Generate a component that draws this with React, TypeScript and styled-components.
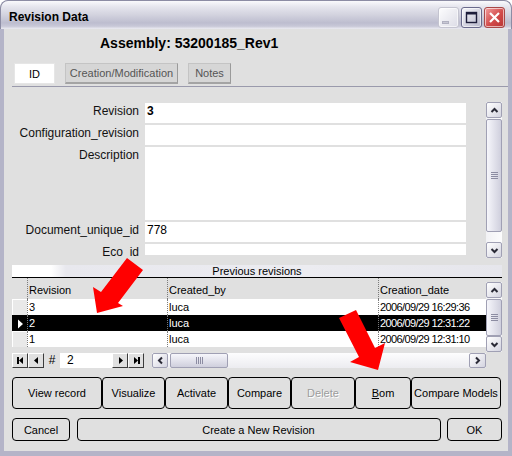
import React from 'react';
import styled, { createGlobalStyle } from 'styled-components';

const GlobalStyle = createGlobalStyle`
  * { box-sizing: border-box; }
  body {
    margin: 0;
    background: #fff;
    font-family: "Liberation Sans", Arial, sans-serif;
  }
`;

type Dir = 'up' | 'down' | 'left' | 'right';
const turn: Record<Dir, number> = { up: 0, right: 90, down: 180, left: 270 };

const fields = [
  { label: 'Revision', value: '3', bold: true },
  { label: 'Configuration_revision', value: '' },
  { label: 'Description', value: '' },
  { label: 'Document_unique_id', value: '778' },
  { label: 'Eco_id', value: '' },
];

const revisions = [
  { rev: '3', by: 'luca', date: '2006/09/29 16:29:36' },
  { rev: '2', by: 'luca', date: '2006/09/29 12:31:22', current: true },
  { rev: '1', by: 'luca', date: '2006/09/29 12:31:10' },
];

const actions = [
  { label: 'View record' },
  { label: 'Visualize' },
  { label: 'Activate' },
  { label: 'Compare' },
  { label: 'Delete', disabled: true },
  { label: 'Bom', mnemonic: true },
  { label: 'Compare Models' },
];

function Chevron({ dir }: { dir: Dir }) {
  return (
    <ChevronSvg $deg={turn[dir]} width="9" height="9" viewBox="0 0 9 9">
      <path d="M1.5 6 L4.5 3 L7.5 6" stroke="#2a2a36" strokeWidth="2" fill="none" />
    </ChevronSvg>
  );
}

function VScroll({ height, thumb, top = 0 }: { height: number; thumb: number; top?: number }) {
  return (
    <VBar $h={height} $top={top}>
      <ScrollBtn><Chevron dir="up" /></ScrollBtn>
      <VThumb $len={thumb}><Grip /></VThumb>
      <Spacer />
      <ScrollBtn><Chevron dir="down" /></ScrollBtn>
    </VBar>
  );
}

function NavGlyph({ kind }: { kind: 'first' | 'prev' | 'next' | 'last' }) {
  const shape = {
    first: 'M2 2 h2 v7 h-2 z M8 2 L4 5.5 L8 9 z',
    prev: 'M7 2 L3 5.5 L7 9 z',
    next: 'M4 2 L8 5.5 L4 9 z',
    last: 'M3 2 L7 5.5 L3 9 z M7 2 h2 v7 h-2 z',
  }[kind];
  return (
    <svg width="11" height="11" viewBox="0 0 11 11">
      <path d={shape} fill="#000" />
    </svg>
  );
}

function Arrows() {
  return (
    <Overlay width="512" height="456" viewBox="0 0 512 456">
      <polygon fill="#ff0000" points="127,258 101,292 93,287 97,313 123,306 118,303 143,270" />
      <polygon fill="#ff0000" points="339,318 359,357 350,362 378,370 385,343 375,348 356,310" />
    </Overlay>
  );
}

export default function App() {
  return (
    <>
      <GlobalStyle />
      <Window>
        <TitleBar>
          <TitleText>Revision Data</TitleText>
          <Controls>
            <CtrlButton $kind="min">
              <MinBar />
            </CtrlButton>
            <CtrlButton $kind="max">
              <svg width="13" height="13" viewBox="0 0 13 13">
                <rect x="1.5" y="1.5" width="10" height="10" fill="none" stroke="#1c1c3a" strokeWidth="1.4" />
                <rect x="1" y="1" width="11" height="2.5" fill="#1c1c3a" />
              </svg>
            </CtrlButton>
            <CtrlButton $kind="close">
              <svg width="13" height="13" viewBox="0 0 13 13">
                <path d="M2 2 L11 11 M11 2 L2 11" stroke="#fff" strokeWidth="2.2" />
              </svg>
            </CtrlButton>
          </Controls>
        </TitleBar>

        <Body>
          <Assembly>Assembly: 53200185_Rev1</Assembly>

          <TabBar>
            <Tab $active $w={41}>ID</Tab>
            <Tab $w={113}>Creation/Modification</Tab>
            <Tab $w={43}>Notes</Tab>
          </TabBar>

          <FormArea>
            <Fields>
              {fields.map((f) => (
                <React.Fragment key={f.label}>
                  <FieldLabel>{f.label}</FieldLabel>
                  <FieldValue $bold={f.bold}>{f.value}</FieldValue>
                </React.Fragment>
              ))}
            </Fields>
            <VScroll height={156} thumb={113} />
          </FormArea>

          <GridPanel>
            <Strip>Previous revisions</Strip>
            <TableArea>
              <Table>
                <HeaderRow>
                  <Indicator $head />
                  <Cell>Revision</Cell>
                  <Cell>Created_by</Cell>
                  <Cell>Creation_date</Cell>
                </HeaderRow>
                {revisions.map((r) => (
                  <Row key={r.rev} $sel={r.current}>
                    <Indicator $sel={r.current}>
                      {r.current && (
                        <svg width="7" height="10" viewBox="0 0 7 10">
                          <path d="M1 0.5 L6 5 L1 9.5 z" fill="#fff" />
                        </svg>
                      )}
                    </Indicator>
                    <Cell>{r.rev}</Cell>
                    <Cell>{r.by}</Cell>
                    <Cell $tight>{r.date}</Cell>
                  </Row>
                ))}
              </Table>
              <VScroll top={4} height={70} thumb={37} />
            </TableArea>

            <NavBar>
              <NavBtn><NavGlyph kind="first" /></NavBtn>
              <NavBtn><NavGlyph kind="prev" /></NavBtn>
              <Hash>#</Hash>
              <RecordBox>2</RecordBox>
              <NavBtn><NavGlyph kind="next" /></NavBtn>
              <NavBtn><NavGlyph kind="last" /></NavBtn>
              <HBar>
                <ScrollBtn><Chevron dir="left" /></ScrollBtn>
                <HThumb $len={58}><Grip $across /></HThumb>
                <Spacer />
                <ScrollBtn $wide><Chevron dir="right" /></ScrollBtn>
              </HBar>
            </NavBar>
          </GridPanel>

          <ButtonRow>
            {actions.map((a) => (
              <Button key={a.label} disabled={a.disabled}>
                {a.mnemonic ? (
                  <>
                    <u>{a.label[0]}</u>
                    {a.label.slice(1)}
                  </>
                ) : (
                  a.label
                )}
              </Button>
            ))}
          </ButtonRow>

          <BottomRow>
            <Button $w={58}>Cancel</Button>
            <Button $w={364}>Create a New Revision</Button>
            <Button $w={55}>OK</Button>
          </BottomRow>
        </Body>

        <Arrows />
      </Window>
    </>
  );
}

const Window = styled.div`
  position: relative;
  width: 512px;
  height: 456px;
  display: flex;
  flex-direction: column;
  border-radius: 8px 8px 0 0;
  overflow: hidden;
  background: #a9a9be;
`;

const TitleBar = styled.div`
  flex: none;
  height: 29px;
  display: flex;
  align-items: center;
  padding: 3px 6px 0 8px;
  border: 1px solid #8c8ca4;
  border-bottom: none;
  border-radius: 8px 8px 0 0;
  background: linear-gradient(
    #fafafc 0%,
    #e6e6ee 20%,
    #d2d2de 50%,
    #bdbdcf 78%,
    #c8c8d8 90%,
    #ececf2 100%
  );
`;

const TitleText = styled.div`
  flex: 1;
  font-size: 12px;
  font-weight: bold;
  color: #000;
`;

const Controls = styled.div`
  display: flex;
  gap: 2px;
  margin-top: 2px;
`;

const CtrlButton = styled.div<{ $kind: 'min' | 'max' | 'close' }>`
  width: 21px;
  height: 21px;
  border-radius: 3px;
  display: flex;
  align-items: center;
  justify-content: center;
  border: 1px solid
    ${(p) => (p.$kind === 'min' ? '#c4c4d0' : p.$kind === 'max' ? '#6a6a8c' : '#a84848')};
  background: ${(p) =>
    p.$kind === 'min'
      ? 'linear-gradient(135deg, #fdfdfe, #dcdce6)'
      : p.$kind === 'max'
        ? 'linear-gradient(135deg, #f6f6fa, #b8b8cc)'
        : 'linear-gradient(135deg, #f4a0a0, #d24a4a 55%, #b83434)'};
  box-shadow: inset 0 0 0 1px rgba(255, 255, 255, 0.6);
`;

const MinBar = styled.div`
  width: 7px;
  height: 3px;
  margin: 10px 6px 0 0;
  background: #c8c8d4;
  border: 1px solid #b0b0c0;
`;

const Body = styled.div`
  flex: 1;
  display: flex;
  flex-direction: column;
  background: #e0e0e0;
  border: solid #b4b4c8;
  border-width: 0 4px 5px 4px;
  box-shadow: -1px 0 #8c8ca4, 1px 0 #8c8ca4, 0 1px #8c8ca4;
  padding: 0 6px 0 8px;
`;

const Assembly = styled.div`
  margin-top: 6px;
  height: 16px;
  line-height: 16px;
  padding-left: 88px;
  font-size: 14px;
  font-weight: bold;
  color: #000;
`;

const TabBar = styled.div`
  margin: 12px -6px 0 0;
  display: flex;
  gap: 10px;
  padding: 0 0 2px 2px;
  border-bottom: 1px solid #9a9aac;
`;

const Tab = styled.div<{ $active?: boolean; $w: number }>`
  width: ${(p) => p.$w}px;
  height: 21px;
  display: flex;
  align-items: center;
  justify-content: center;
  font-size: 11px;
  color: ${(p) => (p.$active ? '#000' : '#555')};
  background: ${(p) => (p.$active ? '#fff' : '#d6d6d6')};
  border: 1px solid ${(p) => (p.$active ? '#e6e6e6' : '#c4c4c4')};
  border-right-color: ${(p) => (p.$active ? '#e6e6e6' : '#9a9a9a')};
  border-bottom: ${(p) => (p.$active ? '1px solid #e6e6e6' : '2px solid #a4a4a4')};
`;

const FormArea = styled.div`
  margin-top: 15px;
  height: 156px;
  display: flex;
  gap: 20px;
`;

const Fields = styled.div`
  width: 454px;
  height: 155px;
  margin-top: 1px;
  overflow: hidden;
  display: grid;
  grid-template-columns: 127px 321px;
  grid-template-rows: 20px 20px 73px 20px 11px;
  column-gap: 6px;
  row-gap: 2px;
`;

const FieldLabel = styled.div`
  text-align: right;
  font-size: 12px;
  line-height: 16px;
  color: #111;
`;

const FieldValue = styled.div<{ $bold?: boolean }>`
  background: #fff;
  font-size: 12px;
  line-height: 16px;
  padding: 0 0 0 2px;
  font-weight: ${(p) => (p.$bold ? 'bold' : 'normal')};
  color: #000;
`;

const VBar = styled.div<{ $h: number; $top: number }>`
  flex: none;
  width: 16px;
  height: ${(p) => p.$h}px;
  margin-top: ${(p) => p.$top}px;
  display: flex;
  flex-direction: column;
  background: linear-gradient(to right, #f2f2f5, #fcfcfd);
`;

const HBar = styled.div`
  width: 334px;
  height: 15px;
  margin-left: 8px;
  display: flex;
  background: linear-gradient(#fdfdfe, #ececf0);
`;

const ScrollBtn = styled.div<{ $wide?: boolean }>`
  flex: none;
  width: ${(p) => (p.$wide ? 17 : 16)}px;
  height: 16px;
  display: flex;
  align-items: center;
  justify-content: center;
  border: 1px solid #a0a0b4;
  border-radius: 2px;
  background: linear-gradient(135deg, #ffffff, #d4d4e0);
  ${HBar} & {
    height: 15px;
  }
`;

const ChevronSvg = styled.svg<{ $deg: number }>`
  transform: rotate(${(p) => p.$deg}deg);
`;

const VThumb = styled.div<{ $len: number }>`
  flex: none;
  height: ${(p) => p.$len}px;
  margin-top: 1px;
  display: flex;
  align-items: center;
  justify-content: center;
  border: 1px solid #a0a0b4;
  border-radius: 2px;
  background: linear-gradient(to right, #f6f6fb, #cfcfdd);
`;

const HThumb = styled.div<{ $len: number }>`
  flex: none;
  width: ${(p) => p.$len}px;
  margin-left: 2px;
  display: flex;
  align-items: center;
  justify-content: center;
  border: 1px solid #a0a0b4;
  border-radius: 2px;
  background: linear-gradient(#f6f6fb, #cfcfdd);
`;

const Grip = styled.div<{ $across?: boolean }>`
  width: 7px;
  height: 7px;
  background: repeating-linear-gradient(
    ${(p) => (p.$across ? 'to right' : 'to bottom')},
    #8c8ca2 0 1px,
    transparent 1px 2px
  );
`;

const Spacer = styled.div`
  flex: 1;
`;

const GridPanel = styled.div`
  margin-top: 7px;
  display: flex;
  flex-direction: column;
`;

const Strip = styled.div`
  height: 13px;
  line-height: 12px;
  text-align: center;
  font-size: 11px;
  color: #000;
  border-bottom: 1px solid #000;
  background: linear-gradient(to right, #fff 0, #fff 8%, #e8e8ee 11%, #ececf1 60%, #e6e6ec 100%);
`;

const TableArea = styled.div`
  height: 74px;
  display: flex;
`;

const Table = styled.div`
  width: 474px;
  display: flex;
  flex-direction: column;
  font-size: 11px;
`;

const columns = '15px 140px 211px 108px';

const HeaderRow = styled.div`
  height: 21px;
  display: grid;
  grid-template-columns: ${columns};
  line-height: 24px;
  background: #e0e0e0;
  color: #000;
`;

const Row = styled.div<{ $sel?: boolean }>`
  height: 16px;
  display: grid;
  grid-template-columns: ${columns};
  line-height: 16px;
  background: ${(p) => (p.$sel ? '#000' : '#fff')};
  color: ${(p) => (p.$sel ? '#fff' : '#000')};
`;

const Cell = styled.div<{ $tight?: boolean }>`
  border-left: 1px dotted #7a7a7a;
  padding-left: 1px;
  white-space: nowrap;
  overflow: hidden;
  letter-spacing: ${(p) => (p.$tight ? '-0.6px' : 'normal')};
`;

const Indicator = styled.div<{ $head?: boolean; $sel?: boolean }>`
  display: flex;
  align-items: center;
  justify-content: center;
  background: ${(p) => (p.$head ? '#e0e0e0' : p.$sel ? '#000' : '#e9e9e9')};
  border-top: 1px solid ${(p) => (p.$head ? 'transparent' : p.$sel ? '#000' : '#fff')};
  border-left: 1px solid ${(p) => (p.$head ? 'transparent' : p.$sel ? '#000' : '#fff')};
`;

const NavBar = styled.div`
  margin-top: 1px;
  height: 15px;
  display: flex;
  align-items: stretch;
`;

const NavBtn = styled.div`
  width: 16px;
  display: flex;
  align-items: center;
  justify-content: center;
  background: #e0e0e0;
  border: 1px solid;
  border-color: #fff #3c3c3c #3c3c3c #fff;
`;

const Hash = styled.div`
  width: 16px;
  font-size: 12px;
  line-height: 15px;
  text-align: center;
  color: #000;
`;

const RecordBox = styled.div`
  width: 52px;
  background: #fff;
  font-size: 12px;
  line-height: 15px;
  padding-left: 7px;
  color: #000;
`;

const ButtonRow = styled.div`
  margin-top: 9px;
  height: 32px;
  display: grid;
  grid-template-columns: 90px 63px 63px 63px 64px 56px 90px;
`;

const BottomRow = styled.div`
  margin-top: 9px;
  height: 23px;
  display: flex;
  justify-content: space-between;
`;

const Button = styled.button<{ $w?: number }>`
  width: ${(p) => (p.$w ? `${p.$w}px` : 'auto')};
  height: 100%;
  padding: 0;
  border: 1px solid #000;
  border-radius: 4px;
  background: #e0e0e0;
  font-family: "Liberation Sans", Arial, sans-serif;
  font-size: 11px;
  color: #000;

  &:disabled {
    color: #9c9c9c;
    text-shadow: 1px 1px #fff;
  }
`;

const Overlay = styled.svg`
  position: absolute;
  left: 0;
  top: 0;
  pointer-events: none;
`;
